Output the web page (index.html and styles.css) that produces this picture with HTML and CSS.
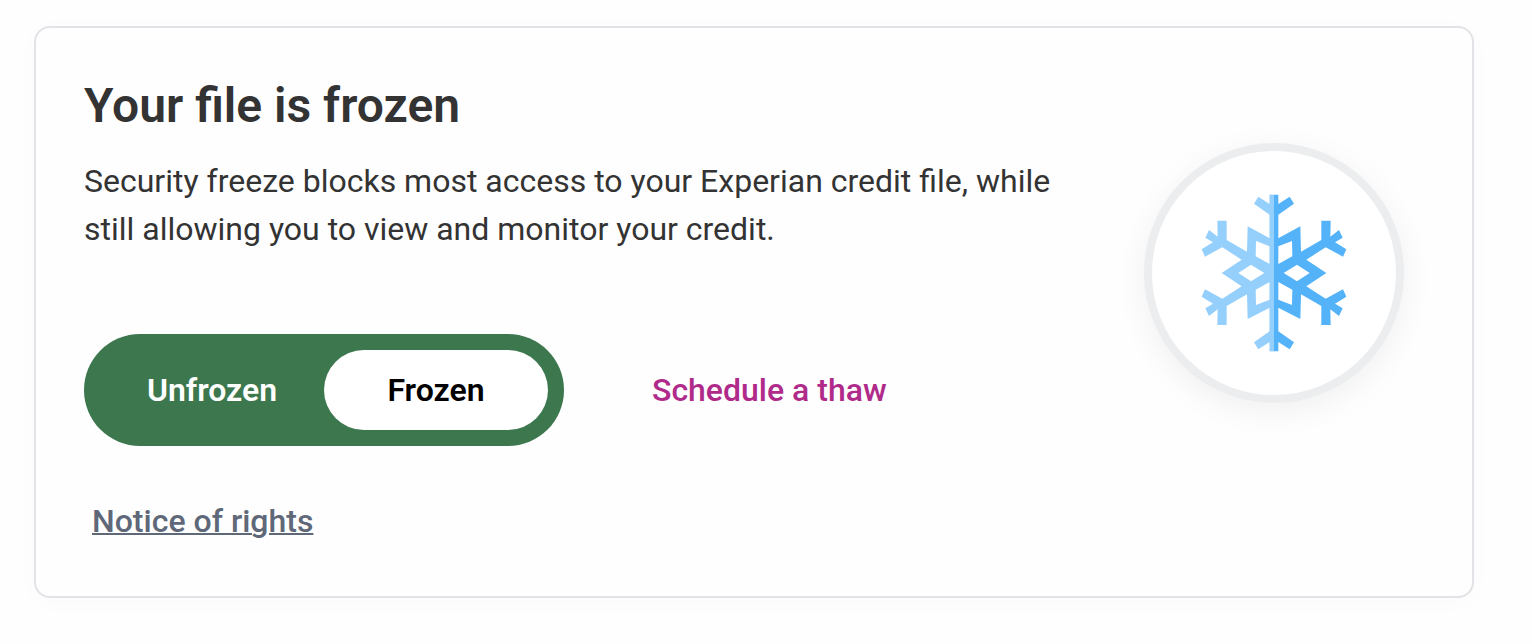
FILE: index.html
```
<!DOCTYPE html>
<html lang="en">
<head>
<meta charset="utf-8">
<meta name="viewport" content="width=device-width, initial-scale=1">
<title>Security freeze</title>
<link rel="stylesheet" href="styles.css">
</head>
<body class="page">
<main class="card">
  <div class="content">
    <h1 class="title">Your file is frozen</h1>
    <p class="description">Security freeze blocks most access to your Experian credit file, while still allowing you to view and monitor your credit.</p>
    <div class="actions">
      <div class="toggle" role="group" aria-label="Security freeze status">
        <button class="option" type="button" aria-pressed="false">Unfrozen</button>
        <button class="option selected" type="button" aria-pressed="true">Frozen</button>
      </div>
      <button class="schedule" type="button">Schedule a thaw</button>
    </div>
    <a class="rights" href="#rights">Notice of rights</a>
  </div>
  <div class="badge">
    <svg class="snowflake" viewBox="0 0 540 558" role="img" aria-label="Snowflake">
      <defs>
        <path id="half" fill-rule="evenodd" d="M270 44H283V72L317 50L330 71L283 104V175L349 139L351 215L412 180V122H440L439 170L465 150L476 173L453 187L487 208L477 230L425 202L367 239L427 279L367 319L425 356L477 328L487 350L453 371L476 385L465 408L439 388L440 435H412V378L351 343L349 417L283 383V454L330 487L317 508L283 486V514H270ZM283 199L324 183L325 229L283 252ZM299 279L339 254L377 279L339 304ZM283 306L325 329L324 375L283 359Z"/>
      </defs>
      <use href="#half" fill="#95cffc" transform="matrix(-1 0 0 1 540 0)"/>
      <use href="#half" fill="#53b2f8"/>
      <path fill="#95cffc" d="M257 44h13v470h-13z"/>
    </svg>
  </div>
</main>
</body>
</html>
```
FILE: styles.css
```
* { box-sizing: border-box; }
.page {
  margin: 0;
  padding: 26px 58px 46px 34px;
  background: #fefefe;
  color: #333;
  font-family: Roboto, "Liberation Sans", sans-serif;
  font-size: 32px;
  line-height: 48px;
}
.card {
  display: flex;
  justify-content: space-between;
  gap: 48px;
  padding: 48px 48px 51px;
  border: 2px solid #e2e2e7;
  border-radius: 16px;
  background: #fefefe;
  box-shadow: 0 4px 24px rgba(0, 0, 0, 0.02);
}
.content {
  flex: 1;
  max-width: 980px;
}
.title {
  margin: 0 0 21px;
  font-size: 48px;
  line-height: 60px;
  font-weight: 600;
}
.description { margin: 0; }
.actions {
  display: flex;
  flex-wrap: wrap;
  align-items: center;
  gap: 24px 88px;
  margin: 81px 0 51px;
}
.toggle {
  display: grid;
  grid-template-columns: 1fr 1fr;
  flex: 0 1 480px;
  padding: 16px;
  border-radius: 56px;
  background: #3c774e;
}
.option {
  padding: 16px;
  border: 0;
  border-radius: 40px;
  background: transparent;
  color: #fff;
  font: inherit;
  font-weight: 600;
}
.selected {
  background: #fff;
  color: #000;
}
.schedule {
  padding: 0;
  border: 0;
  background: none;
  color: #b02a8a;
  font: inherit;
  font-weight: 500;
}
.rights {
  display: inline-block;
  margin-left: 8px;
  color: #5f6878;
  font-weight: 500;
  text-decoration: underline;
  text-decoration-thickness: 2px;
}
.badge {
  display: grid;
  flex: none;
  place-items: center;
  width: 260px;
  height: 260px;
  margin: 67px 20px 0 0;
  border: 8px solid #ebedef;
  border-radius: 50%;
  background: #fff;
  box-shadow: 0 8px 32px rgba(0, 0, 0, 0.06);
}
.snowflake {
  width: 180px;
  height: 186px;
}
```
